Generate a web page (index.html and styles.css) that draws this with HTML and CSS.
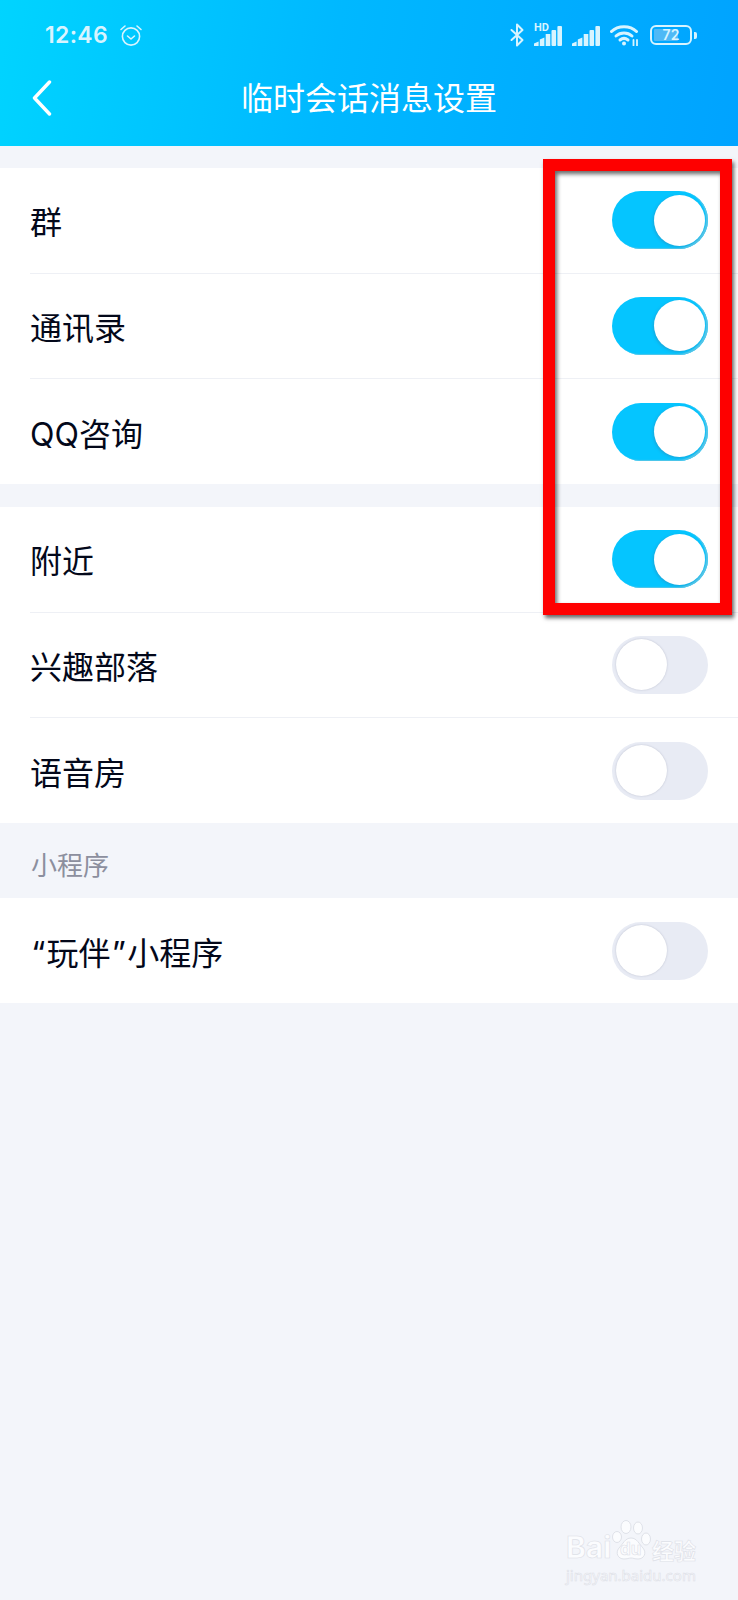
FILE: index.html
```html
<!DOCTYPE html>
<html lang="zh-CN">
<head>
    <meta charset="UTF-8">
    <meta name="viewport" content="width=device-width, initial-scale=1.0">
    <title>临时会话消息设置</title>
    <link rel="stylesheet" href="styles.css">
</head>
<body>
    <div class="page">
        <header class="top">
            <div class="status-bar">
                <div class="status-left">
                    <span class="time">12:46</span>
                    <svg class="alarm" width="24" height="24" viewBox="0 0 24 24" fill="none" stroke="currentColor" stroke-width="1.6" stroke-linecap="round" stroke-linejoin="round">
                        <circle cx="12" cy="13.5" r="8.6"/>
                        <path d="M8.5 13l3.5 3 3.5-3"/>
                        <path d="M2 6.5L6 3M22 6.5L18 3"/>
                    </svg>
                </div>
                <div class="status-right">
                    <svg class="bt" width="14" height="24" viewBox="0 0 14 24" fill="none" stroke="currentColor" stroke-width="2" stroke-linejoin="round" stroke-linecap="round">
                        <path d="M1.500 7l11 10-5.500 5.500v-21l5.500 5.500-11 10"/>
                    </svg>
                    <div class="signal-hd">
                        <span class="hd">HD</span>
                        <svg width="28" height="22" viewBox="0 0 28 22" fill="currentColor">
                            <path d="M0 22v-2.500l4.600-2V22z"/>
                            <path d="M5.800 22v-6.500l4.600-2V22z"/>
                            <rect x="11.700" y="10" width="4.600" height="12"/>
                            <rect x="17.500" y="6" width="4.600" height="16" rx="1"/>
                            <rect x="23.400" y="2" width="4.600" height="20" rx="1"/>
                        </svg>
                    </div>
                    <svg class="signal" width="28" height="22" viewBox="0 0 28 22" fill="currentColor">
                        <path d="M0 22v-2.500l4.600-2V22z"/>
                        <path d="M5.800 22v-6.500l4.600-2V22z"/>
                        <rect x="11.700" y="10" width="4.600" height="12"/>
                        <rect x="17.500" y="6" width="4.600" height="16" rx="1"/>
                        <rect x="23.400" y="2" width="4.600" height="20" rx="1"/>
                    </svg>
                    <svg class="wifi" width="29" height="22" viewBox="0 0 29 22" fill="none" stroke="currentColor" stroke-width="3" stroke-linecap="round">
                        <path d="M1.500 7.500C8 1 20 1 26.500 7.500"/>
                        <path d="M6 12c4.500-4 11.500-4 16 0"/>
                        <path d="M10 16c2.500-2 5.500-2 8 0"/>
                        <circle cx="14" cy="19.500" r="2" fill="currentColor" stroke="none"/>
                        <path d="M23.500 16v5.500M27 16v5.500" stroke-width="1.800"/>
                    </svg>
                    <div class="battery">
                        <div class="battery-body">
                            <div class="battery-fill" style="width: 72%"></div>
                            <span class="battery-num">72</span>
                        </div>
                        <div class="battery-nub"></div>
                    </div>
                </div>
            </div>
            <div class="nav">
                <svg class="back" width="20" height="36" viewBox="0 0 20 36" fill="none" stroke="currentColor" stroke-width="3.400" stroke-linecap="round" stroke-linejoin="round">
                    <path d="M17.500 2L2.500 18l15 16"/>
                </svg>
                <h1>临时会话消息设置</h1>
            </div>
        </header>

        <section class="group first">
            <div class="row"><span>群</span><div class="toggle on"></div></div>
            <div class="row"><span>通讯录</span><div class="toggle on"></div></div>
            <div class="row last"><span>QQ咨询</span><div class="toggle on"></div></div>
        </section>

        <section class="group second">
            <div class="row"><span>附近</span><div class="toggle on"></div></div>
            <div class="row"><span>兴趣部落</span><div class="toggle"></div></div>
            <div class="row last"><span>语音房</span><div class="toggle"></div></div>
        </section>

        <div class="section-label">小程序</div>

        <section class="group">
            <div class="row last"><span><span class="quote">“</span>玩伴<span class="quote">”</span>小程序</span><div class="toggle"></div></div>
        </section>

        <div class="red-box"></div>

        <div class="watermark">
            <div class="wm-logo">
                <span class="wm-bai">Bai</span>
                <div class="wm-paw">
                    <svg width="40" height="42" viewBox="0 0 40 42" fill="#fbfcfe" stroke="#dfe2e9" stroke-width="1">
                        <ellipse cx="5" cy="17" rx="4.500" ry="5.500"/>
                        <ellipse cx="14" cy="7" rx="5" ry="6.500"/>
                        <ellipse cx="26" cy="8" rx="4.500" ry="6"/>
                        <ellipse cx="34" cy="19" rx="4.500" ry="6"/>
                        <path d="M19 18c6 0 8 6 12 10 4 5 1 11-5 11-3 0-5-1-7-1s-4 1-7 1c-6 0-9-6-5-11 4-4 6-10 12-10z"/>
                    </svg>
                    <span class="wm-du">du</span>
                </div>
                <span class="wm-cn">经验</span>
            </div>
            <div class="wm-url">jingyan.baidu.com</div>
        </div>
    </div>
</body>
</html>
```

FILE: styles.css
```css
* {
    margin: 0;
    padding: 0;
    box-sizing: border-box;
}

body {
    background-color: #f3f5fa;
    color: #03081a;
    font-family: Inter, 'Noto Sans CJK SC', sans-serif;
}

.page {
    position: relative;
    width: 738px;
    height: 1600px;
    overflow: hidden;
}

.top {
    height: 146px;
    background: linear-gradient(100deg, #00d4ff 0%, #00b8ff 45%, #00a3ff 100%);
    color: #fff;
}

.status-bar {
    height: 64px;
    padding: 6px 41px 0 45px;
    display: flex;
    justify-content: space-between;
    align-items: center;
    color: #d8f4ff;
}

.status-left {
    display: flex;
    align-items: center;
    gap: 11px;
}

.time {
    font-size: 23px;
    font-weight: 600;
    letter-spacing: 0.3px;
}

.status-right {
    display: flex;
    align-items: center;
    gap: 10px;
}

.signal-hd {
    position: relative;
    width: 28px;
    height: 22px;
}

.hd {
    position: absolute;
    top: -1px;
    left: 0;
    font-family: Roboto, sans-serif;
    font-size: 11px;
    font-weight: 700;
    line-height: 10px;
}

.signal-hd svg {
    display: block;
}

.battery {
    display: flex;
    align-items: center;
    gap: 2px;
    margin-left: 1px;
}

.battery-body {
    position: relative;
    width: 42px;
    height: 20px;
    border: 2px solid #d8f4ff;
    border-radius: 6px;
    padding: 2px;
}

.battery-fill {
    height: 100%;
    background-color: #4fb9f6;
    border-radius: 1px;
}

.battery-num {
    position: absolute;
    top: 0;
    left: 0;
    right: 0;
    text-align: center;
    font-size: 14px;
    font-weight: 600;
    line-height: 16px;
}

.battery-nub {
    width: 3px;
    height: 7px;
    background-color: #d8f4ff;
    border-radius: 0 2px 2px 0;
}

.nav {
    position: relative;
    height: 82px;
    padding-bottom: 12px;
    display: flex;
    align-items: center;
    justify-content: center;
}

.back {
    position: absolute;
    top: 16px;
    left: 32px;
}

h1 {
    font-size: 32px;
    font-weight: 400;
    line-height: 1;
}

.group {
    background-color: #fff;
}

.first {
    margin-top: 22px;
}

.second {
    margin-top: 23px;
}

.row {
    height: 105.500px;
    margin-left: 30px;
    padding-right: 30px;
    display: flex;
    justify-content: space-between;
    align-items: center;
    border-bottom: 1px solid #eef0f5;
    font-size: 32px;
}

.row.last {
    height: 105px;
    border-bottom: none;
}

.quote {
    margin: 0 1.250px;
}

.toggle {
    position: relative;
    width: 96px;
    height: 58px;
    border-radius: 29px;
    background-color: #e8ebf4;
}

.toggle::after {
    content: '';
    position: absolute;
    top: 3.500px;
    left: 4px;
    width: 51px;
    height: 51px;
    border-radius: 50%;
    background-color: #fff;
    box-shadow: 0 0 2px rgba(130, 135, 160, 0.45);
}

.toggle.on {
    background-color: #05c5ff;
    box-shadow: inset -2px -1px 1px #55c6e8;
}

.toggle.on::after {
    left: 41.500px;
    box-shadow: -1px 1px 3px rgba(60, 120, 160, 0.4);
}

.section-label {
    height: 75px;
    padding: 5px 0 0 31px;
    display: flex;
    align-items: center;
    font-size: 26px;
    color: #8c8f9e;
}

.red-box {
    position: absolute;
    top: 159px;
    left: 543px;
    width: 189px;
    height: 456px;
    border: 12px solid #fe0000;
    box-shadow: 2px 3px 4px rgba(0, 0, 0, 0.6), inset 2px 3px 4px rgba(0, 0, 0, 0.6);
}

.watermark {
    position: absolute;
    top: 1520px;
    left: 566px;
    width: 134px;
    color: #fbfcfe;
    -webkit-text-stroke: 0.6px #dde0e7;
}

.wm-logo {
    display: flex;
    align-items: flex-end;
    height: 42px;
}

.wm-bai {
    font-size: 30px;
    font-weight: 700;
    line-height: 30px;
    width: 46px;
}

.wm-paw {
    position: relative;
    width: 40px;
    height: 42px;
}

.wm-du {
    position: absolute;
    left: 8px;
    bottom: 3px;
    font-size: 17px;
    font-weight: 700;
    line-height: 20px;
}

.wm-cn {
    font-family: 'Noto Sans CJK SC', sans-serif;
    font-size: 22px;
    font-weight: 700;
    line-height: 26px;
    white-space: nowrap;
}

.wm-url {
    font-family: 'Noto Sans', sans-serif;
    font-size: 15px;
    line-height: 20px;
    margin-top: 3px;
    white-space: nowrap;
}
```
